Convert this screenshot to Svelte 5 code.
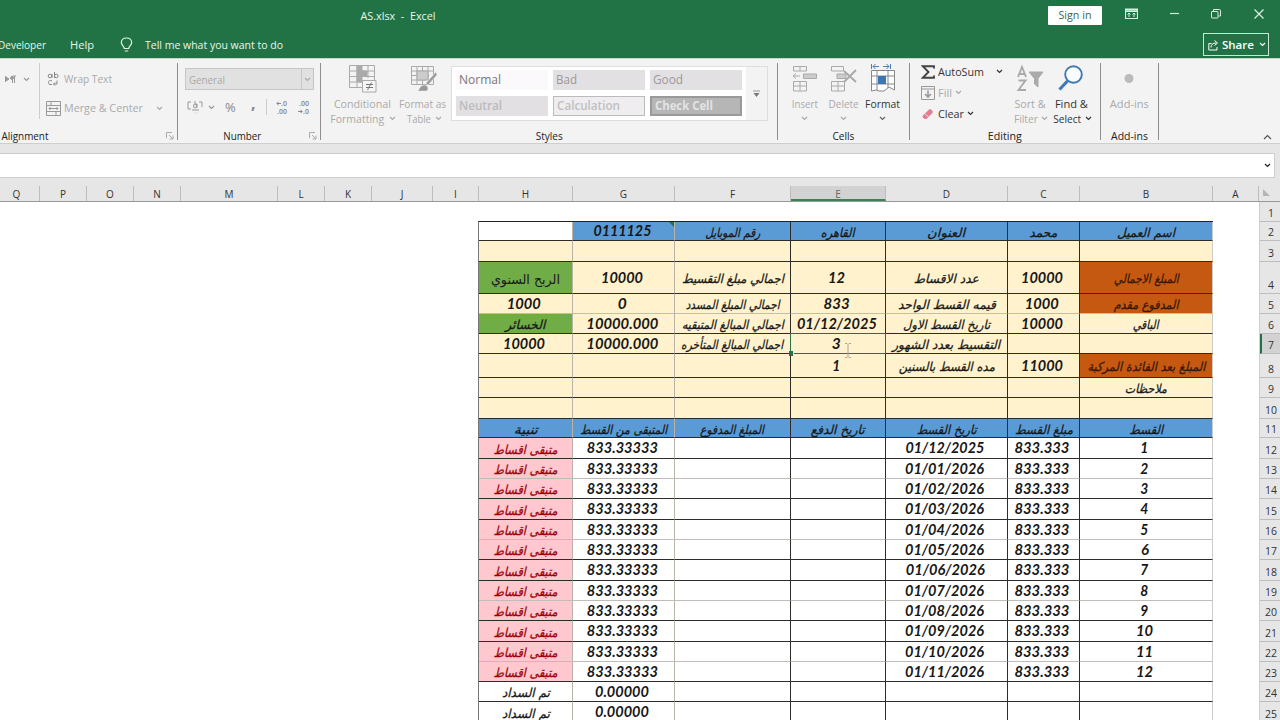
<script lang="ts">
  type Cell = { t: string; w: number; bg?: string; kind?: string };

  const columns = [
    ['Q', 40], ['P', 47], ['O', 47], ['N', 47], ['M', 97], ['L', 47], ['K', 47], ['J', 61], ['I', 46],
    ['H', 94], ['G', 102], ['F', 116], ['E', 95], ['D', 122], ['C', 72], ['B', 133], ['A', 46]
  ] as [string, number][];

  // bottom edge of every visible row
  const edges = [222, 241, 262, 294, 314, 334, 354, 378, 398, 419, 438, 459, 479, 499, 520, 540, 560, 581, 601, 621, 642, 662, 682, 702, 723];
  const heights = edges.map((e, i) => e - (i ? edges[i - 1] : 202));
  const faintRows = [5, 13, 16, 19, 22];

  const n = (t: string, w: number, bg = ''): Cell => ({ t, w, bg, kind: 'num' });
  const a = (t: string, w: number, bg = ''): Cell => ({ t, w, bg, kind: 'ar' });
  const e = (bg = ''): Cell => ({ t: '', w: 0, bg });

  // cells run left to right: H G F E D C B
  const top: Cell[][] = [
    [e('white'), n('0111125', 58, 'blue'), a('رقم الموبايل', 55, 'blue'), a('القاهره', 34, 'blue'), a('العنوان', 38, 'blue'), a('محمد', 28, 'blue'), a('اسم العميل', 58, 'blue')],
    [e(), e(), e(), e(), e(), e(), e()],
    [{ t: 'الربح السنوي', w: 69, bg: 'green', kind: 'plain' }, n('10000', 42), a('اجمالي مبلغ التقسيط', 102), n('12', 17), a('عدد الاقساط', 65), n('10000', 42), a('المبلغ الاجمالي', 65, 'orange')],
    [n('1000', 34), n('0', 9), a('اجمالي المبلغ المسدد', 94), n('833', 26), a('قيمه القسط الواحد', 98), n('1000', 34), a('المدفوع مقدم', 65, 'orange')],
    [a('الخسائر', 40, 'green'), n('10000.000', 72), a('اجمالي المبالغ المتبقيه', 102), n('01/12/2025', 80), a('تاريخ القسط الاول', 87), n('10000', 42), a('الباقي', 26)],
    [n('10000', 42), n('10000.000', 72), a('اجمالي المبالغ المتأخره', 102), n('3', 9), a('التقسيط بعدد الشهور', 108), e(), e()],
    [e(), e(), e(), n('1', 8), a('مده القسط بالسنين', 96), n('11000', 42), a('المبلغ بعد الفائدة المركبة', 118, 'orange')],
    [e(), e(), e(), e(), e(), e(), a('ملاحظات', 42)],
    [e(), e(), e(), e(), e(), e(), e()],
    [a('تنبية', 24, 'blue'), a('المتبقى من القسط', 87, 'blue'), a('المبلغ المدفوع', 64, 'blue'), a('تاريخ الدفع', 54, 'blue'), a('تاريخ القسط', 60, 'blue'), a('مبلغ القسط', 58, 'blue'), a('القسط', 34, 'blue')]
  ];

  const dates = ['01/12/2025', ...Array.from({ length: 11 }, (_, i) => `01/${String(i + 1).padStart(2, '0')}/2026`)];

  const payments: Cell[][] = dates.map((d, i) => [
    a('متبقى اقساط', 64, 'pink'), n('833.33333', 71, 'white'), e('white'), e('white'),
    n(d, 79, 'white'), n('833.333', 55, 'white'), n(String(i + 1), i > 8 ? 17 : 8, 'white')
  ]);

  const paid = (): Cell[] => [a('تم السداد', 48, 'white'), n('0.00000', 54, 'white'), e('white'), e('white'), e('white'), e('white'), e('white')];

  const grid = [...top, ...payments, paid(), paid()];

  // squeeze or stretch a label to the width it has in the sheet
  function fit(node: HTMLElement, width: number) {
    const natural = node.getBoundingClientRect().width;
    if (width && natural) node.style.transform = `scaleX(${width / natural})`;
  }
</script>

{#snippet chev()}
  <svg class="chev" width="7" height="5" viewBox="0 0 7 5"><path d="M1 1L3.5 3.5L6 1" fill="none" stroke="currentColor" stroke-width="1.2" /></svg>
{/snippet}

{#snippet launcher()}
  <svg class="launcher" width="8" height="8" viewBox="0 0 8 8" fill="none" stroke="#aaa"><path d="M.5 6V.5H6M3 3L7 7M7 3.5V7H3.5" /></svg>
{/snippet}

<div class="excel">
  <header>
    <div class="titlebar">
      <span class="file"><span class="txt" use:fit={75}>AS.xlsx&nbsp; - &nbsp;Excel</span></span>
      <button class="signin"><span class="txt" use:fit={33}>Sign in</span></button>
      <div class="window">
        <svg width="13" height="12" viewBox="0 0 13 12" fill="none" stroke="#d9efe1"><path d="M.5 1H12.5V10.5H.5ZM.5 3.5H12.5M1 2.2H12" stroke-width="1.2" /><path d="M4 5V9M9 5V9M2.5 6.5L4 5L5.5 6.5M7.5 6.5L9 5L10.5 6.5" /></svg>
        <svg width="11" height="12" viewBox="0 0 11 12" stroke="#c4f0d5"><path d="M1 5.5H10" stroke-width="1.2" /></svg>
        <svg width="12" height="12" viewBox="0 0 12 12" fill="none" stroke="#d9efe1"><path d="M1.5 4Q1.5 3.5 2 3.5H7.5Q8 3.5 8 4V9.5Q8 10 7.5 10H2Q1.5 10 1.5 9.5ZM3.5 3V1.5H9.5Q10.5 1.5 10.5 2.5V8H8.5" /></svg>
        <svg width="12" height="12" viewBox="0 0 12 12" stroke="#d9efe1"><path d="M1.5 1.5L10.5 10.5M10.5 1.5L1.5 10.5" stroke-width="1.2" /></svg>
      </div>
    </div>
    <nav>
      <div class="dev"><span class="txt left" use:fit={48}>Developer</span></div>
      <div class="help"><span class="txt left" use:fit={24}>Help</span></div>
      <svg class="bulb" width="13" height="16" viewBox="0 0 13 16" fill="none" stroke="#e4f5ea" stroke-width="1.2"><path d="M4.3 11.5C4.3 9 1.3 8.5 1.3 5.6C1.3 2.8 3.6 1 6.5 1S11.7 2.8 11.7 5.6C11.7 8.5 8.7 9 8.7 11.5ZM4.8 14H8.2" /></svg>
      <span class="tell txt left" use:fit={138}>Tell me what you want to do</span>
      <button class="share">
        <svg width="11" height="12" viewBox="0 0 11 12" fill="none" stroke="#fff"><path d="M3.5 4.5H.8V11H9V8M3 8.5C3 5.5 5 4 8 4M6.5 1.5L9.5 4L6.5 6.5" /></svg>
        <span class="share-label"><span class="txt" use:fit={32}>Share</span></span>
        {@render chev()}
      </button>
    </nav>
  </header>

  <section class="ribbon">
    <div class="group align">
      <div class="body">
        <div class="dir">
          <svg width="13" height="9" viewBox="0 0 13 9" fill="none" stroke="#999"><path d="M1.5 1V7M8.5 8V1H12M10.5 1V8" /><path d="M2 2L5 4L2 6Z" fill="#999" /><circle cx="8" cy="3" r="1.4" fill="#999" /></svg>
          {@render chev()}
        </div>
        <div class="wraps">
          <div class="line off">
            <svg width="15" height="14" viewBox="0 0 15 14" fill="none" stroke="#888"><circle cx="4" cy="4" r="1.8" /><path d="M6 2V6M8.5 0V6M6 9Q2.5 7.5 2.5 10.5T6 12.5M11 8.5V12H7.5M9 10.5L7.5 12L9 13.5" /><circle cx="10.3" cy="4" r="1.8" /></svg>
            <span class="txt left" use:fit={48}>Wrap Text</span>
          </div>
          <div class="line off">
            <svg width="15" height="15" viewBox="0 0 15 15" fill="none" stroke="#999"><path d="M.5 .5H14.5V14.5H.5ZM.5 4.5H14.5M.5 10.5H14.5M5 .5V4.5M10 10.5V14.5M3 7.5H12M4.5 6L3 7.5L4.5 9M10.5 6L12 7.5L10.5 9" /></svg>
            <span class="merge"><span class="txt left" use:fit={79}>Merge &amp; Center</span></span>
            {@render chev()}
          </div>
        </div>
      </div>
      <div class="caption"><span class="txt" use:fit={47}>Alignment</span></div>
      {@render launcher()}
    </div>

    <div class="group number">
      <div class="body">
        <div class="format-box"><span class="txt left" use:fit={36}>General</span><i>{@render chev()}</i></div>
        <div class="num-tools off">
          <svg width="17" height="13" viewBox="0 0 17 13" fill="none" stroke="#999"><path d="M4 1H1V8H4M7 1H9M12 1H15V6M7 3H10V7M5 9H12" /><ellipse cx="8" cy="5" rx="1.5" ry="2" /><path d="M7 12H11" stroke="#ddd" /></svg>
          {@render chev()}
          <span class="pct">%</span>
          <b>,</b>
          <i class="sep"></i>
          <div class="dec">
            <div><svg width="5" height="5" viewBox="0 0 5 5" fill="none" stroke="#888"><path d="M5 2.5H1M2.5 .8L.8 2.5L2.5 4.2" /></svg><span>.0</span></div>
            <div>.00</div>
          </div>
          <div class="dec">
            <div>.00</div>
            <div><svg width="5" height="5" viewBox="0 0 5 5" fill="none" stroke="#888"><path d="M0 2.5H4M2.5 .8L4.2 2.5L2.5 4.2" /></svg><span>.0</span></div>
          </div>
        </div>
      </div>
      <div class="caption"><span class="txt" use:fit={38}>Number</span></div>
      {@render launcher()}
    </div>

    <div class="group styles">
      <div class="body">
        <div class="big off cond">
          <svg width="29" height="29" viewBox="0 0 29 29" fill="none" stroke="#aaa"><path d="M1.5 1.5H26.5V23.5H1.5ZM1.5 7H26.5M1.5 12.5H26.5M1.5 18H14M9 1.5V23.5M20 1.5V14" /><path d="M9 2H14V7H19V12H14V18H9Z" fill="#aaa" /><path d="M14.5 16.5H28V28H14.5Z" fill="#f6f5f6" /><path d="M18 20.5H25M18 23.5H25M23.5 18.5L19.5 26" stroke="#777" /></svg>
          <span class="txt" use:fit={57}>Conditional</span>
          <span class="second"><span class="txt" use:fit={54}>Formatting</span>{@render chev()}</span>
        </div>
        <div class="big off tbl">
          <svg width="29" height="29" viewBox="0 0 29 29" fill="none" stroke="#aaa"><path d="M2.5 2.5H24.5V20.5H2.5ZM2.5 7H24M2.5 11.5H20M2.5 16H17M8 2.5V20M13.5 2.5V20M19 2.5V16" /><path d="M8 7H19V16H8Z" fill="#ccc" /><path d="M27 8L17 19L19 21L28 11ZM16 21Q12 20 9 27H18Q20 24 18 22Z" fill="#999" stroke="#eee" stroke-width=".5" /></svg>
          <span class="txt" use:fit={47}>Format as</span>
          <span class="second"><span class="txt" use:fit={24}>Table</span>{@render chev()}</span>
        </div>
        <div class="gallery">
          <div class="swatches">
            <span class="sw normal"><span class="txt left" use:fit={42}>Normal</span></span>
            <span class="sw"><span class="txt left" use:fit={21}>Bad</span></span>
            <span class="sw"><span class="txt left" use:fit={30}>Good</span></span>
            <span class="sw pale"><span class="txt left" use:fit={43}>Neutral</span></span>
            <span class="sw calc"><span class="txt left" use:fit={63}>Calculation</span></span>
            <span class="sw check"><span class="txt left" use:fit={58}>Check Cell</span></span>
          </div>
          <div class="more"><svg width="7" height="8" viewBox="0 0 7 8"><path d="M0 1H7" stroke="#999" /><path d="M.5 3H6.5L3.5 7Z" fill="#777" /></svg></div>
        </div>
      </div>
      <div class="caption"><span class="txt" use:fit={27}>Styles</span></div>
    </div>

    <div class="group cells">
      <div class="body">
        <div class="big off">
          <svg width="27" height="29" viewBox="0 0 27 29" fill="none" stroke="#aaa"><path d="M2.5 2.5H15.5V7H2.5ZM9 2.5V7M2.5 17.5H15.5V27H2.5ZM2.5 22H15.5M9 17.5V27M9 12H2M5 9.5L2 12L5 14.5" /><path d="M12.5 10H25.5V14.5H12.5Z" fill="#ccc" /></svg>
          <span class="txt" use:fit={26}>Insert</span>{@render chev()}
        </div>
        <div class="big off">
          <svg width="29" height="29" viewBox="0 0 29 29" fill="none" stroke="#aaa"><path d="M2.5 2.5H14.5V7H2.5ZM2.5 17.5H15.5V27H2.5ZM2.5 22H15.5M9 17.5V27" /><path d="M8 10H17V14.5H8Z" fill="#ccc" /><path d="M15 7L27 18M27 6L15 18" stroke-width="2" /></svg>
          <span class="txt" use:fit={30}>Delete</span>{@render chev()}
        </div>
        <div class="big fmt">
          <svg width="29" height="29" viewBox="0 0 29 29" fill="none"><path d="M3.5 6.5H26.5V26L21 23L16 27H11L8 26L3.5 27ZM3.5 12H26.5M3.5 20H26.5M9 7V26M20 7V24" stroke="#888" fill="#fff" /><path d="M10 12H18V20H10Z" fill="#3c77b5" /><path d="M3.5 0V5M22.5 0V5M5 2.5H11M7.5 0L5 2.5L7.5 5M15 2.5H21M18.5 0L21 2.5L18.5 5" stroke="#4b80b8" /></svg>
          <span class="txt" use:fit={35}>Format</span>{@render chev()}
        </div>
      </div>
      <div class="caption"><span class="txt" use:fit={22}>Cells</span></div>
    </div>

    <div class="group editing">
      <div class="body">
        <div class="edits">
          <div class="line">
            <svg width="14" height="14" viewBox="0 0 14 14" fill="none" stroke="#444" stroke-width="1.9"><path d="M13 3.5V1.2H1.8L7.5 7L1.8 12.8H13V10.5" /></svg>
            <span class="auto"><span class="txt left" use:fit={46}>AutoSum</span></span>{@render chev()}
          </div>
          <div class="line off">
            <svg width="14" height="14" viewBox="0 0 14 14" fill="none" stroke="#999"><path d="M.5 .5H13.5V13.5H.5ZM.5 3H13.5" /><path d="M7 4.5V11M4 8L7 11L10 8" stroke-width="1.6" /></svg>
            <span class="txt left" use:fit={14}>Fill</span>{@render chev()}
          </div>
          <div class="line clear">
            <svg width="14" height="14" viewBox="0 0 14 14"><path d="M1.5 9L8 2.5Q9 1.5 10 2.5L11.5 4Q12.3 5 11.5 6L5.5 12H3.5L1.5 10Z" fill="#df7f96" /><path d="M4 6.5L8 10.5" stroke="#f8dce3" /></svg>
            <span class="txt left" use:fit={26}>Clear</span>{@render chev()}
          </div>
        </div>
        <div class="big off sort">
          <svg width="29" height="29" viewBox="0 0 29 29" fill="none" stroke="#aaa" stroke-width="1.9"><path d="M2 13L6 3L10 13M3.5 10H8.5M2.5 16.5H9.5L2.5 26H10" /><path d="M13 8H27L22 14.5V23L18.5 20V14.5Z" fill="#aaa" stroke-width="1" /></svg>
          <span class="txt" use:fit={31}>Sort &amp;</span>
          <span class="second"><span class="txt" use:fit={24}>Filter</span>{@render chev()}</span>
        </div>
        <div class="big find">
          <svg width="29" height="29" viewBox="0 0 29 29" fill="none" stroke="#3e79b8"><circle cx="16.5" cy="10.5" r="8.3" fill="#fafcff" stroke-width="1.9" /><path d="M10.5 17L2.5 25.5" stroke-width="3.2" /></svg>
          <span class="txt" use:fit={33}>Find &amp;</span>
          <span class="second"><span class="txt" use:fit={28}>Select</span>{@render chev()}</span>
        </div>
      </div>
      <div class="caption"><span class="txt" use:fit={34}>Editing</span></div>
    </div>

    <div class="group addins">
      <div class="body">
        <div class="big off">
          <svg width="29" height="29" viewBox="0 0 29 29"><circle cx="14" cy="14.5" r="4.5" fill="#bbb" /></svg>
          <span class="txt" use:fit={39}>Add-ins</span>
        </div>
      </div>
      <div class="caption"><span class="txt" use:fit={37}>Add-ins</span></div>
    </div>

    <svg class="collapse" width="9" height="6" viewBox="0 0 9 6"><path d="M1 5L4.5 1.5L8 5" fill="none" stroke="#555" stroke-width="1.2" /></svg>
  </section>

  <div class="formula"><div class="input">{@render chev()}</div></div>

  <div class="col-heads">
    {#each columns as [name, width]}
      <div class="col" class:active={name === 'E'} style:width="{width}px">{name}</div>
    {/each}
    <div class="corner"><svg width="7" height="7" viewBox="0 0 7 7"><path d="M0 0L7 7H0Z" fill="#b5b5b5" /></svg></div>
  </div>

  <div class="sheet">
    <div class="cells-area">
      {#each grid as row, r}
        <div class="row" class:faint={faintRows.includes(r + 2)} style:height="{heights[r + 1]}px">
          {#each row as cell, c}
            <div class="cell {cell.bg} {cell.kind ?? ''}" class:selected={r === 5 && c === 3}>
              {#if cell.t}<span class="txt" dir={cell.kind === 'num' ? 'ltr' : 'rtl'} use:fit={cell.w}>{cell.t}</span>{/if}
              {#if r === 0 && c === 1}<i class="flag"></i>{/if}
              {#if r === 5 && c === 3}
                <i class="handle"></i>
                <svg class="cursor" width="8" height="15" viewBox="0 0 8 15" fill="none" stroke="#a9a69a"><path d="M1 .5H3L4 1.5L5 .5H7M4 1.5V13.5M1 14.5H3L4 13.5L5 14.5H7" /></svg>
              {/if}
            </div>
          {/each}
        </div>
      {/each}
    </div>
    <div class="row-heads">
      {#each heights as h, i}
        <div class="rh" class:active={i === 6} style:height="{h}px">{i + 1}</div>
      {/each}
    </div>
  </div>
</div>

<style>
  :global(body) { overflow: hidden; }

  .excel {
    width: 1280px;
    height: 720px;
    overflow: hidden;
    background: #fff;
    color: #333;
    font: 11px "Open Sans", "Noto Sans", sans-serif;
  }

  .excel *, .excel { box-sizing: border-box; }
  svg { display: block; flex-shrink: 0; }
  button { font: inherit; padding: 0; }
  .txt { display: inline-block; white-space: nowrap; flex-shrink: 0; }
  .left { transform-origin: left center; }
  .off { color: #aaa; }

  header { height: 58px; background: #217346; color: #e8f5ed; }

  .titlebar {
    display: flex;
    align-items: center;
    height: 30px;
  }

  .file { width: 796px; text-align: center; padding-top: 1px; font-size: 11.5px; }

  .signin {
    width: 54px;
    height: 19px;
    margin-left: 252px;
    border: 0;
    border-radius: 1px;
    background: #fff;
    color: #3c6650;
    line-height: 18px;
  }

  .window {
    display: flex;
    justify-content: space-between;
    width: 140px;
    margin-left: 23px;
    margin-top: -2px;
  }

  nav { display: flex; align-items: center; height: 28px; font-size: 11.5px; padding-top: 1px; }
  .dev { width: 49px; margin-left: -2px; }
  .help { width: 26px; margin-left: 23px; }
  .bulb { margin-left: 24px; }
  .tell { margin-left: 12px; }

  .share {
    display: flex;
    align-items: center;
    width: 66px;
    height: 23px;
    margin-left: auto;
    margin-right: 11px;
    padding-left: 4px;
    border: 1px solid #c9e8d4;
    background: none;
    color: #fff;
    font-weight: 600;
  }

  .share-label { width: 38px; text-align: center; }
  .share .chev { margin-left: 2px; }

  .ribbon {
    position: relative;
    display: flex;
    height: 86px;
    padding-top: 4px;
    background: #f3f3f3;
    border-top: 1px solid #c9d6cd;
    border-bottom: 1px solid #cfcfcf;
  }

  .group {
    position: relative;
    display: flex;
    flex-direction: column;
    height: 77px;
    border-right: 1px solid #8e8e8e;
  }

  .body { display: flex; height: 66px; flex-shrink: 0; }
  .caption { height: 14px; line-height: 14px; text-align: center; font-size: 10.5px; color: #222; flex-shrink: 0; }
  .launcher { position: absolute; right: 3px; bottom: 0; }

  .align { width: 178px; }
  .align .caption { width: 42px; }
  .dir { display: flex; align-items: flex-start; gap: 6px; width: 40px; padding: 12px 0 0 4px; color: #999; border-right: 1px solid #ccc; height: 56px; }
  .dir .chev { margin-top: 2px; }
  .wraps { padding: 8px 0 0 6px; }
  .wraps .line { height: 16px; margin-bottom: 13px; }
  .line { display: flex; align-items: center; gap: 3px; line-height: 14px; }
  .merge { width: 89px; }

  .number { width: 143px; }
  .number .caption { width: 128px; }
  .number .body { flex-direction: column; }

  .format-box {
    display: flex;
    align-items: center;
    width: 129px;
    height: 22px;
    margin: 5px 0 0 7px;
    padding-left: 3px;
    border: 1px solid #c6c6c6;
    background: #e1e1e1;
    color: #aaa;
  }

  .format-box i { display: flex; align-items: center; margin-left: auto; height: 20px; width: 12px; padding-left: 2px; border-left: 1px solid #c6c6c6; }
  .num-tools { display: flex; align-items: center; height: 20px; margin: 7px 0 0 9px; color: #888; }
  .num-tools .chev { margin-left: 4px; color: #999; }
  .pct { width: 26px; margin-left: 10px; font-size: 13px; }
  .num-tools b { width: 15px; font-size: 16px; line-height: 8px; margin-top: -8px; }
  .sep { width: 1px; height: 16px; background: #ccc; }
  .dec { display: flex; flex-direction: column; align-items: flex-end; gap: 1px; width: 20px; font-size: 7px; line-height: 7px; font-weight: 600; }
  .dec + .dec { width: 22px; }
  .dec div { display: flex; align-items: center; height: 7px; }

  .styles { width: 457px; }
  .big { display: flex; flex-direction: column; align-items: center; padding-top: 1px; line-height: 14.5px; }
  .big.off { color: #aaa; }
  .big > svg:first-child { margin-bottom: 4px; }
  .big > .chev { margin-top: 4px; }
  .second { display: flex; align-items: center; gap: 3px; }
  .second .chev { margin-right: -1px; }
  .cond { width: 64px; margin-left: 9px; }
  .tbl { width: 58px; }

  .gallery {
    display: flex;
    width: 317px;
    height: 55px;
    margin-top: 3px;
    margin-left: -1px;
    background: #fff;
    border: 1px solid #dedede;
  }

  .swatches { display: grid; grid-template-columns: repeat(3, 92px); grid-auto-rows: 20px; gap: 6px 5px; padding: 3px 4px; font-size: 12px; line-height: 16px; }
  .sw { display: flex; align-items: center; padding-left: 3px; background: #e3e0e3; color: #999; }
  .sw.normal { background: #fbf9fb; color: #777; }
  .sw.pale { color: #bbb; font-weight: 600; }
  .sw.calc { background: #efedef; border: 1px solid #bbb; font-weight: 600; color: #c0c0c0; }
  .sw.check { background: #b6b6b6; border: 2px solid #999; font-weight: 700; color: #e3e3e3; }
  .more { display: flex; align-items: center; justify-content: center; width: 22px; margin-left: auto; background: #f3f3f3; }

  .cells { width: 132px; }
  .cells .body { padding-left: 7px; }
  .cells .big { width: 39px; }
  .fmt, .find { color: #333; }
  .fmt .chev { color: #666; }

  .editing { width: 191px; }
  .edits { width: 100px; padding: 1px 0 0 11px; }
  .edits .line { height: 15px; margin-bottom: 6px; }
  .auto { width: 55px; }
  .clear .chev { margin-left: -1px; }
  .sort { width: 40px; }
  .find { width: 43px; }

  .addins { width: 58px; }
  .addins .big { width: 57px; }
  .collapse { position: absolute; right: 8px; bottom: 3px; }

  .formula { height: 34px; padding: 9px 5px 0 0; background: #e6e6e6; }
  .input { display: flex; align-items: center; justify-content: flex-end; height: 25px; padding-right: 3px; background: #fff; border: 1px solid #cdcdcd; border-left: 0; color: #222; }

  .col-heads { display: flex; height: 24px; padding-top: 8px; background: #e6e6e6; border-bottom: 1px solid #999; }
  .col { height: 15px; border-right: 1px solid #bdbdbd; text-align: center; font-size: 10px; line-height: 16px; }
  .col:first-child { padding-right: 6px; }
  .col.active { background: #d2d2d2; border-bottom: 2px solid #3f8058; color: #56705f; }
  .corner { padding: 3px 0 0 4px; }

  .sheet { display: flex; justify-content: flex-end; }
  .cells-area { width: 735px; margin-top: 19px; margin-right: 46px; border-top: 1px solid #222; border-left: 1px solid #777; }
  .row { display: grid; grid-template-columns: 94px 102px 116px 95px 122px 72px 133px; grid-template-rows: 100%; }

  .cell {
    position: relative;
    display: flex;
    align-items: center;
    justify-content: center;
    min-width: 0;
    background: #fff2cc;
    border-right: 1px solid #2e2c28;
    border-bottom: 1px solid #2e2c28;
    color: #171717;
  }

  .cell:nth-child(1), .cell:nth-child(2) { border-right-color: #b9b4a8; }
  .cell:last-child { border-right-color: #ccc; }
  .faint .cell { border-bottom-color: #c0bdb8; }
  .cell.blue { background: #5b9bd5; }
  .cell.green { background: #70ad47; }
  .cell.orange { background: #c65911; color: #351706; }
  .cell.white { background: #fff; }
  .cell.pink { background: #ffc7ce; color: #9c0006; }

  .num { font: italic 700 14.5px/18px Lato, Carlito, sans-serif; padding-right: 3px; }
  .ar { font: italic 400 12.5px/16px "DejaVu Sans", sans-serif; padding-top: 3px; -webkit-text-stroke: .25px currentColor; }
  .plain { font: 13px/18px "DejaVu Sans", sans-serif; padding-top: 4px; }

  .cell.selected { border-color: #217346; box-shadow: 0 -1px #217346, -1px 0 #217346, -1px -1px #217346; z-index: 1; }
  .handle { position: absolute; left: -2px; bottom: -3px; width: 5px; height: 5px; background: #217346; border-right: 1px solid #fff2cc; }
  .cursor { position: absolute; left: 53px; top: 9px; }
  .flag { position: absolute; right: 0; top: 0; border-top: 5px solid #217346; border-left: 5px solid transparent; }

  .row-heads { width: 21px; background: #e6e6e6; border-left: 1px solid #cfcfcf; }
  .rh { display: flex; align-items: flex-end; justify-content: center; padding-left: 2px; border-bottom: 1px solid #bdbdbd; font-size: 10.5px; line-height: 16px; }
  .rh.active { background: #d2d2d2; border-left: 2px solid #217346; padding-left: 0; }
</style>
